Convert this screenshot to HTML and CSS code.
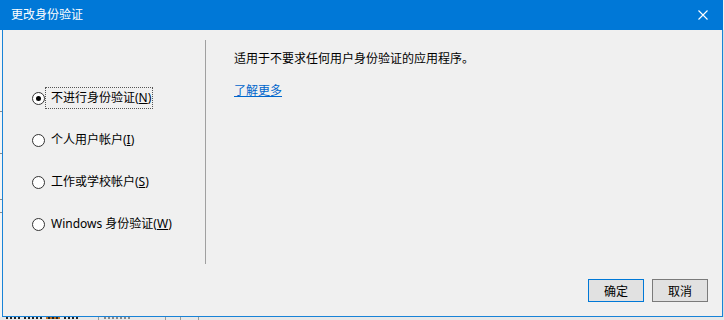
FILE: index.html
```html
<!DOCTYPE html>
<html lang="zh-CN">
<head>
<meta charset="UTF-8">
<title>更改身份验证</title>
<link rel="stylesheet" href="styles.css">
</head>
<body>

<!-- title bar -->
<div class="titlebar">
    <span class="title">更改身份验证</span>
    <svg class="close" width="10" height="10" viewBox="0 0 10 10">
        <path d="M0.5 0.5 L9.5 9.5 M9.5 0.5 L0.5 9.5" stroke="#fff" stroke-width="1.1" fill="none"/>
    </svg>
</div>

<div class="frame">
    <div class="gutter-left"></div>
    <div class="dialog">
        <div class="panes">
            <div class="options">
                <div class="option">
                    <span class="radio checked"></span>
                    <span class="label focus">不进行身份验证(<u>N</u>)</span>
                </div>
                <div class="option">
                    <span class="radio"></span>
                    <span class="label">个人用户帐户(<u>I</u>)</span>
                </div>
                <div class="option">
                    <span class="radio"></span>
                    <span class="label">工作或学校帐户(<u>S</u>)</span>
                </div>
                <div class="option">
                    <span class="radio"></span>
                    <span class="label">Windows 身份验证(<u>W</u>)</span>
                </div>
            </div>
            <div class="divider"></div>
            <div class="info">
                <p class="desc">适用于不要求任何用户身份验证的应用程序。</p>
                <a class="more" href="#">了解更多</a>
            </div>
        </div>
        <div class="buttons">
            <button class="btn default">确定</button>
            <button class="btn">取消</button>
        </div>
    </div>
    <div class="gutter-right"></div>
</div>

<!-- edge of the window behind -->
<div class="behind">
    <span class="smudge s1"></span>
    <span class="smudge s2"></span>
    <span class="smudge s3"></span>
    <span class="smudge s4"></span>
    <span class="tick t1"></span>
    <span class="smudge s5"></span>
    <span class="tick t2"></span>
    <span class="tick t3"></span>
    <span class="tick t4"></span>
</div>

</body>
</html>
```

FILE: styles.css
```css
body {
    margin: 0;
    width: 724px;
    height: 320px;
    overflow: hidden;
    background: #f0f0f0;
    font-family: "Noto Sans", "Noto Sans CJK SC", sans-serif;
    font-size: 12px;
    line-height: 16px;
    color: #000;
}

.titlebar {
    height: 30px;
    width: 723px;
    background: #0078d7;
    color: #fff;
    display: flex;
    align-items: center;
    justify-content: space-between;
    box-sizing: border-box;
    padding: 0 11px 0 11px;
}

.title {
    font-size: 12px;
    margin-top: -1px;
}

.close {
    display: block;
    margin-right: 4px;
    margin-top: -1px;
}

.frame {
    display: flex;
    height: 287px;
}

.gutter-left {
    width: 2px;
    background: #f4f4f4;
    background-image: linear-gradient(#f4f4f4 81px, #8a8a8a 81px, #8a8a8a 82px, #f4f4f4 82px, #f4f4f4 123px, #8a8a8a 123px, #8a8a8a 124px, #f4f4f4 124px, #f4f4f4 169px, #8a8a8a 169px, #8a8a8a 170px, #f4f4f4 170px, #f4f4f4 182px, #8a8a8a 182px, #8a8a8a 183px, #f4f4f4 183px);
}

.gutter-right {
    width: 1px;
    background: #dcdcdc;
}

.dialog {
    width: 719px;
    border: 1px solid #1883d7;
    border-top: none;
    background: #f0f0f0;
    display: flex;
    flex-direction: column;
}

.panes {
    display: flex;
    padding-top: 10px;
    height: 239px;
    box-sizing: border-box;
}

.options {
    width: 202px;
    display: flex;
    flex-direction: column;
    gap: 20px;
    padding-top: 47px;
    box-sizing: border-box;
}

.option {
    display: flex;
    align-items: center;
    height: 22px;
    padding-left: 29px;
}

.radio {
    width: 11px;
    height: 11px;
    border: 1px solid #333;
    border-radius: 50%;
    background: #fff;
    position: relative;
    flex: none;
}

.radio.checked::after {
    content: "";
    position: absolute;
    left: 3px;
    top: 3px;
    width: 5px;
    height: 5px;
    border-radius: 50%;
    background: #000;
}

.label {
    border: 1px dotted transparent;
    padding: 2px 1px 2px 5px;
    line-height: 16px;
}

.label.focus {
    border-color: #555;
}

.divider {
    width: 1px;
    height: 224px;
    background: #a0a0a0;
}

.info {
    padding-left: 28px;
    padding-top: 11px;
}

.desc {
    margin: 0;
}

.more {
    display: inline-block;
    margin-top: 16px;
    color: #0066cc;
    text-decoration: underline;
}

.buttons {
    display: flex;
    justify-content: flex-end;
    gap: 8px;
    padding: 10px 14px 0 0;
}

.btn {
    width: 56px;
    height: 23px;
    padding: 0;
    border: 1px solid #7a7a7a;
    background: #e1e1e1;
    font-family: "Noto Sans CJK SC", sans-serif;
    font-size: 12px;
    color: #000;
}

.btn.default {
    border-color: #0078d7;
}

.behind {
    height: 3px;
    background: #e8e8e8;
    position: relative;
    overflow: hidden;
}

.smudge {
    position: absolute;
    top: 0;
    height: 2px;
    background: repeating-linear-gradient(90deg, #222 0 2px, #e8e8e8 2px 4px);
}

.s1 { left: 6px; width: 14px; }
.s2 { left: 24px; width: 18px; }
.s3 { left: 46px; width: 14px; background: repeating-linear-gradient(90deg, #c07020 0 2px, #222 2px 4px); }
.s4 { left: 64px; width: 14px; }
.s5 { left: 104px; width: 28px; background: repeating-linear-gradient(90deg, #888 0 2px, #e8e8e8 2px 4px); }

.tick {
    position: absolute;
    top: 0;
    width: 1px;
    height: 3px;
    background: #999;
}

.t1 { left: 98px; }
.t2 { left: 165px; }
.t3 { left: 180px; }
.t4 { left: 198px; }
```
